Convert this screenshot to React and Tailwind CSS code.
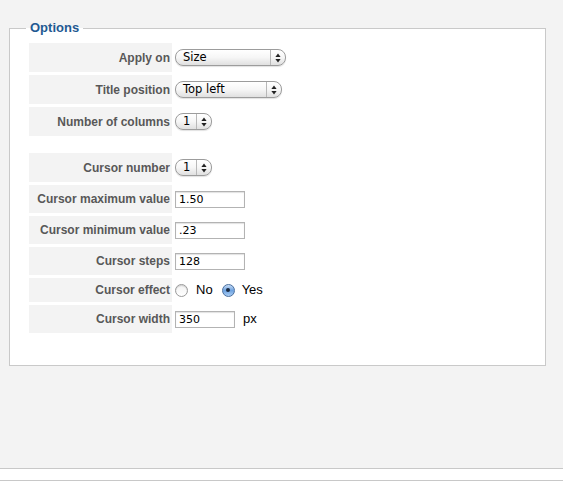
import React from "react";

const font = { fontFamily: '"Liberation Sans", Arial, sans-serif' };

function Arrows() {
  return (
    <svg width="6" height="10" viewBox="0 0 6 10" className="block">
      <path d="M3 0.5 L5.6 4 L0.4 4 Z" fill="#222" />
      <path d="M3 9.5 L5.6 6 L0.4 6 Z" fill="#222" />
    </svg>
  );
}

function Select({ value, width }) {
  return (
    <div
      className="flex h-[17px] items-stretch rounded-[8px] border border-[#9c9c9c] bg-gradient-to-b from-[#ffffff] via-[#f6f6f6] to-[#e0e0e0] shadow-[0_1px_1px_rgba(0,0,0,0.12)]"
      style={{ width }}
    >
      <div className="flex flex-1 items-center pl-[7px] text-[11.5px] leading-none text-black" style={{ fontFamily: '"DejaVu Sans", Verdana, sans-serif' }}>
        {value}
      </div>
      <div className="flex w-[15px] items-center justify-center border-l border-[#b8b8b8]">
        <Arrows />
      </div>
    </div>
  );
}

function TextInput({ value, width }) {
  return (
    <div
      className="flex h-[17px] items-center border border-[#b3b3b3] bg-white pl-[3px] text-[11px] leading-none text-black shadow-[inset_0_1px_1px_rgba(0,0,0,0.12)]"
      style={{ width, fontFamily: '"DejaVu Sans", Verdana, sans-serif' }}
    >
      {value}
    </div>
  );
}

function Radio({ checked }) {
  return checked ? (
    <div className="flex h-[13px] w-[13px] items-center justify-center rounded-full border border-[#4a6f9e] bg-gradient-to-b from-[#c7dcf5] via-[#6fa3e0] to-[#a9cdf5]">
      <div className="h-[4px] w-[4px] rounded-full bg-[#1a2a40]" />
    </div>
  ) : (
    <div className="h-[13px] w-[13px] rounded-full border border-[#9a9a9a] bg-gradient-to-b from-[#f2f2f2] to-[#ffffff] shadow-[inset_0_1px_1px_rgba(0,0,0,0.15)]" />
  );
}

function Row({ label, h, children }) {
  return (
    <div className="flex" style={{ height: h }}>
      <div className="flex w-[143px] items-center justify-end bg-[#f3f3f3] pr-[2px] text-[12px] font-bold leading-none text-[#585858]">
        {label}
      </div>
      <div className="flex items-center pl-[3px]">{children}</div>
    </div>
  );
}

export default function App() {
  return (
    <div className="flex h-[483px] w-[563px] flex-col bg-[#f3f3f3]" style={font}>
      <fieldset className="ml-[9px] mt-[20px] w-[537px] border border-[#c9c9c9] bg-white pb-[32px] pt-[7px]">
        <legend className="ml-[16px] px-[4px] text-[13px] font-bold leading-[16px] text-[#1f5a92]">
          Options
        </legend>
        <div className="flex flex-col gap-[3px] pl-[19px]">
          <Row label="Apply on" h={29}>
            <Select value="Size" width={111} />
          </Row>
          <Row label="Title position" h={29}>
            <Select value="Top left" width={107} />
          </Row>
          <Row label="Number of columns" h={29}>
            <Select value="1" width={37} />
          </Row>
          <div className="h-[11px]" />
          <Row label="Cursor number" h={29}>
            <Select value="1" width={37} />
          </Row>
          <Row label="Cursor maximum value" h={28}>
            <TextInput value="1.50" width={70} />
          </Row>
          <Row label="Cursor minimum value" h={28}>
            <TextInput value=".23" width={70} />
          </Row>
          <Row label="Cursor steps" h={28}>
            <TextInput value="128" width={70} />
          </Row>
          <Row label="Cursor effect" h={24}>
            <div className="flex items-center text-[13px] text-black">
              <Radio checked={false} />
              <span className="ml-[8px]">No</span>
              <span className="ml-[9px]"><Radio checked /></span>
              <span className="ml-[7px]">Yes</span>
            </div>
          </Row>
          <Row label="Cursor width" h={28}>
            <div className="flex items-center">
              <TextInput value="350" width={60} />
              <span className="ml-[8px] text-[13px] text-black">px</span>
            </div>
          </Row>
        </div>
      </fieldset>
      <div className="flex-1" />
      <div className="h-[12px] border-t border-[#c8c8c8] bg-white" />
      <div className="h-[3px] border-t border-[#c8c8c8] bg-white" />
    </div>
  );
}
